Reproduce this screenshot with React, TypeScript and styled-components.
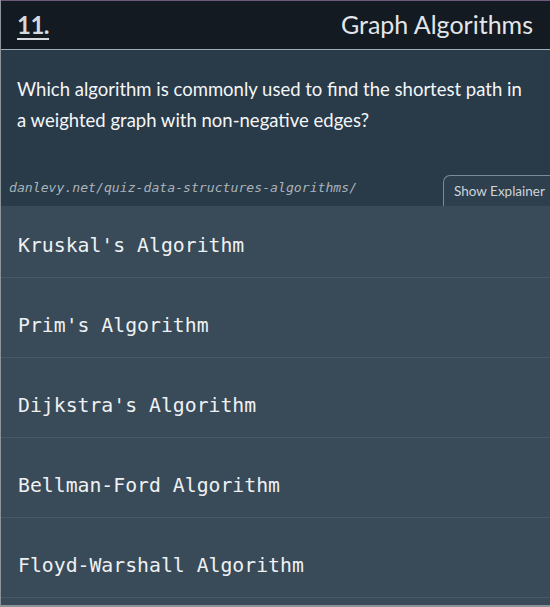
import React from "react";
import styled, { createGlobalStyle } from "styled-components";

const Global = createGlobalStyle`
  html, body { margin: 0; padding: 0; background: #8d9499; }
  body { width: 550px; height: 607px; overflow: hidden; }
`;

const Card = styled.div`
  width: 549px;
  height: 604px;
  margin-left: 1px;
  background: #394a58;
  border-top: 1px solid #6d5a7c;
  display: flex;
  flex-direction: column;
  overflow: hidden;
`;

const Header = styled.header`
  height: 48px;
  background: #131a21;
  border-bottom: 1px solid #9eacb3;
  display: flex;
  align-items: center;
  justify-content: space-between;
  padding: 0 17px 2px 16px;
  box-sizing: border-box;
  height: 49px;
  font-family: "Lato", "Open Sans", sans-serif;
`;

const Number = styled.span`
  font-size: 24px;
  font-weight: 700;
  color: #d6dade;
  text-decoration: underline;
  text-decoration-thickness: 2px;
  text-underline-offset: 4px;
  letter-spacing: -0.5px;
`;

const Title = styled.h1`
  margin: 0;
  font-size: 25px;
  font-weight: 400;
  color: #e2e6ea;
`;

const QuestionArea = styled.section`
  background: #293a48;
  display: flex;
  flex-direction: column;
`;

const Question = styled.p`
  margin: 0;
  padding: 24px 24px 0 16px;
  height: 110px;
  box-sizing: border-box;
  font-family: "Lato", "Open Sans", sans-serif;
  font-size: 18.5px;
  line-height: 31px;
  color: #f4f6f8;
`;

const FooterRow = styled.div`
  display: flex;
  align-items: flex-end;
  justify-content: space-between;
  height: 46px;
`;

const Url = styled.span`
  font-family: "DejaVu Sans Mono", monospace;
  font-style: italic;
  font-size: 13.15px;
  color: #aab3bb;
  padding: 0 0 11px 8px;
`;

const ExplainerButton = styled.button`
  height: 31px;
  width: 107px;
  box-sizing: border-box;
  padding: 0 0 0 10px;
  text-align: left;
  background: #2e3f4d;
  border: 1px solid #7a8a97;
  border-bottom: none;
  border-right: none;
  border-top-left-radius: 7px;
  font-family: "Lato", "Open Sans", sans-serif;
  font-size: 13.5px;
  color: #cdd4da;
`;

const Options = styled.ol`
  list-style: none;
  margin: 0;
  padding: 0;
`;

const Option = styled.li<{ $first?: boolean }>`
  height: ${(p) => (p.$first ? 64 : 63)}px;
  padding: ${(p) => (p.$first ? 7 : 16)}px 0 0 17px;
  border-bottom: 1px solid #485a68;
  display: flex;
  align-items: center;
  font-family: "DejaVu Sans Mono", monospace;
  font-size: 19.8px;
  color: #eef1f3;
`;

const options = [
  "Kruskal's Algorithm",
  "Prim's Algorithm",
  "Dijkstra's Algorithm",
  "Bellman-Ford Algorithm",
  "Floyd-Warshall Algorithm",
];

export default function App() {
  return (
    <>
      <Global />
      <Card>
        <Header>
          <Number>11.</Number>
          <Title>Graph Algorithms</Title>
        </Header>
        <QuestionArea>
          <Question>
            Which algorithm is commonly used to find the shortest path in a weighted graph
            with non-negative edges?
          </Question>
          <FooterRow>
            <Url>danlevy.net/quiz-data-structures-algorithms/</Url>
            <ExplainerButton>Show Explainer</ExplainerButton>
          </FooterRow>
        </QuestionArea>
        <Options>
          {options.map((o, i) => (
            <Option key={o} $first={i === 0}>
              {o}
            </Option>
          ))}
        </Options>
      </Card>
    </>
  );
}
